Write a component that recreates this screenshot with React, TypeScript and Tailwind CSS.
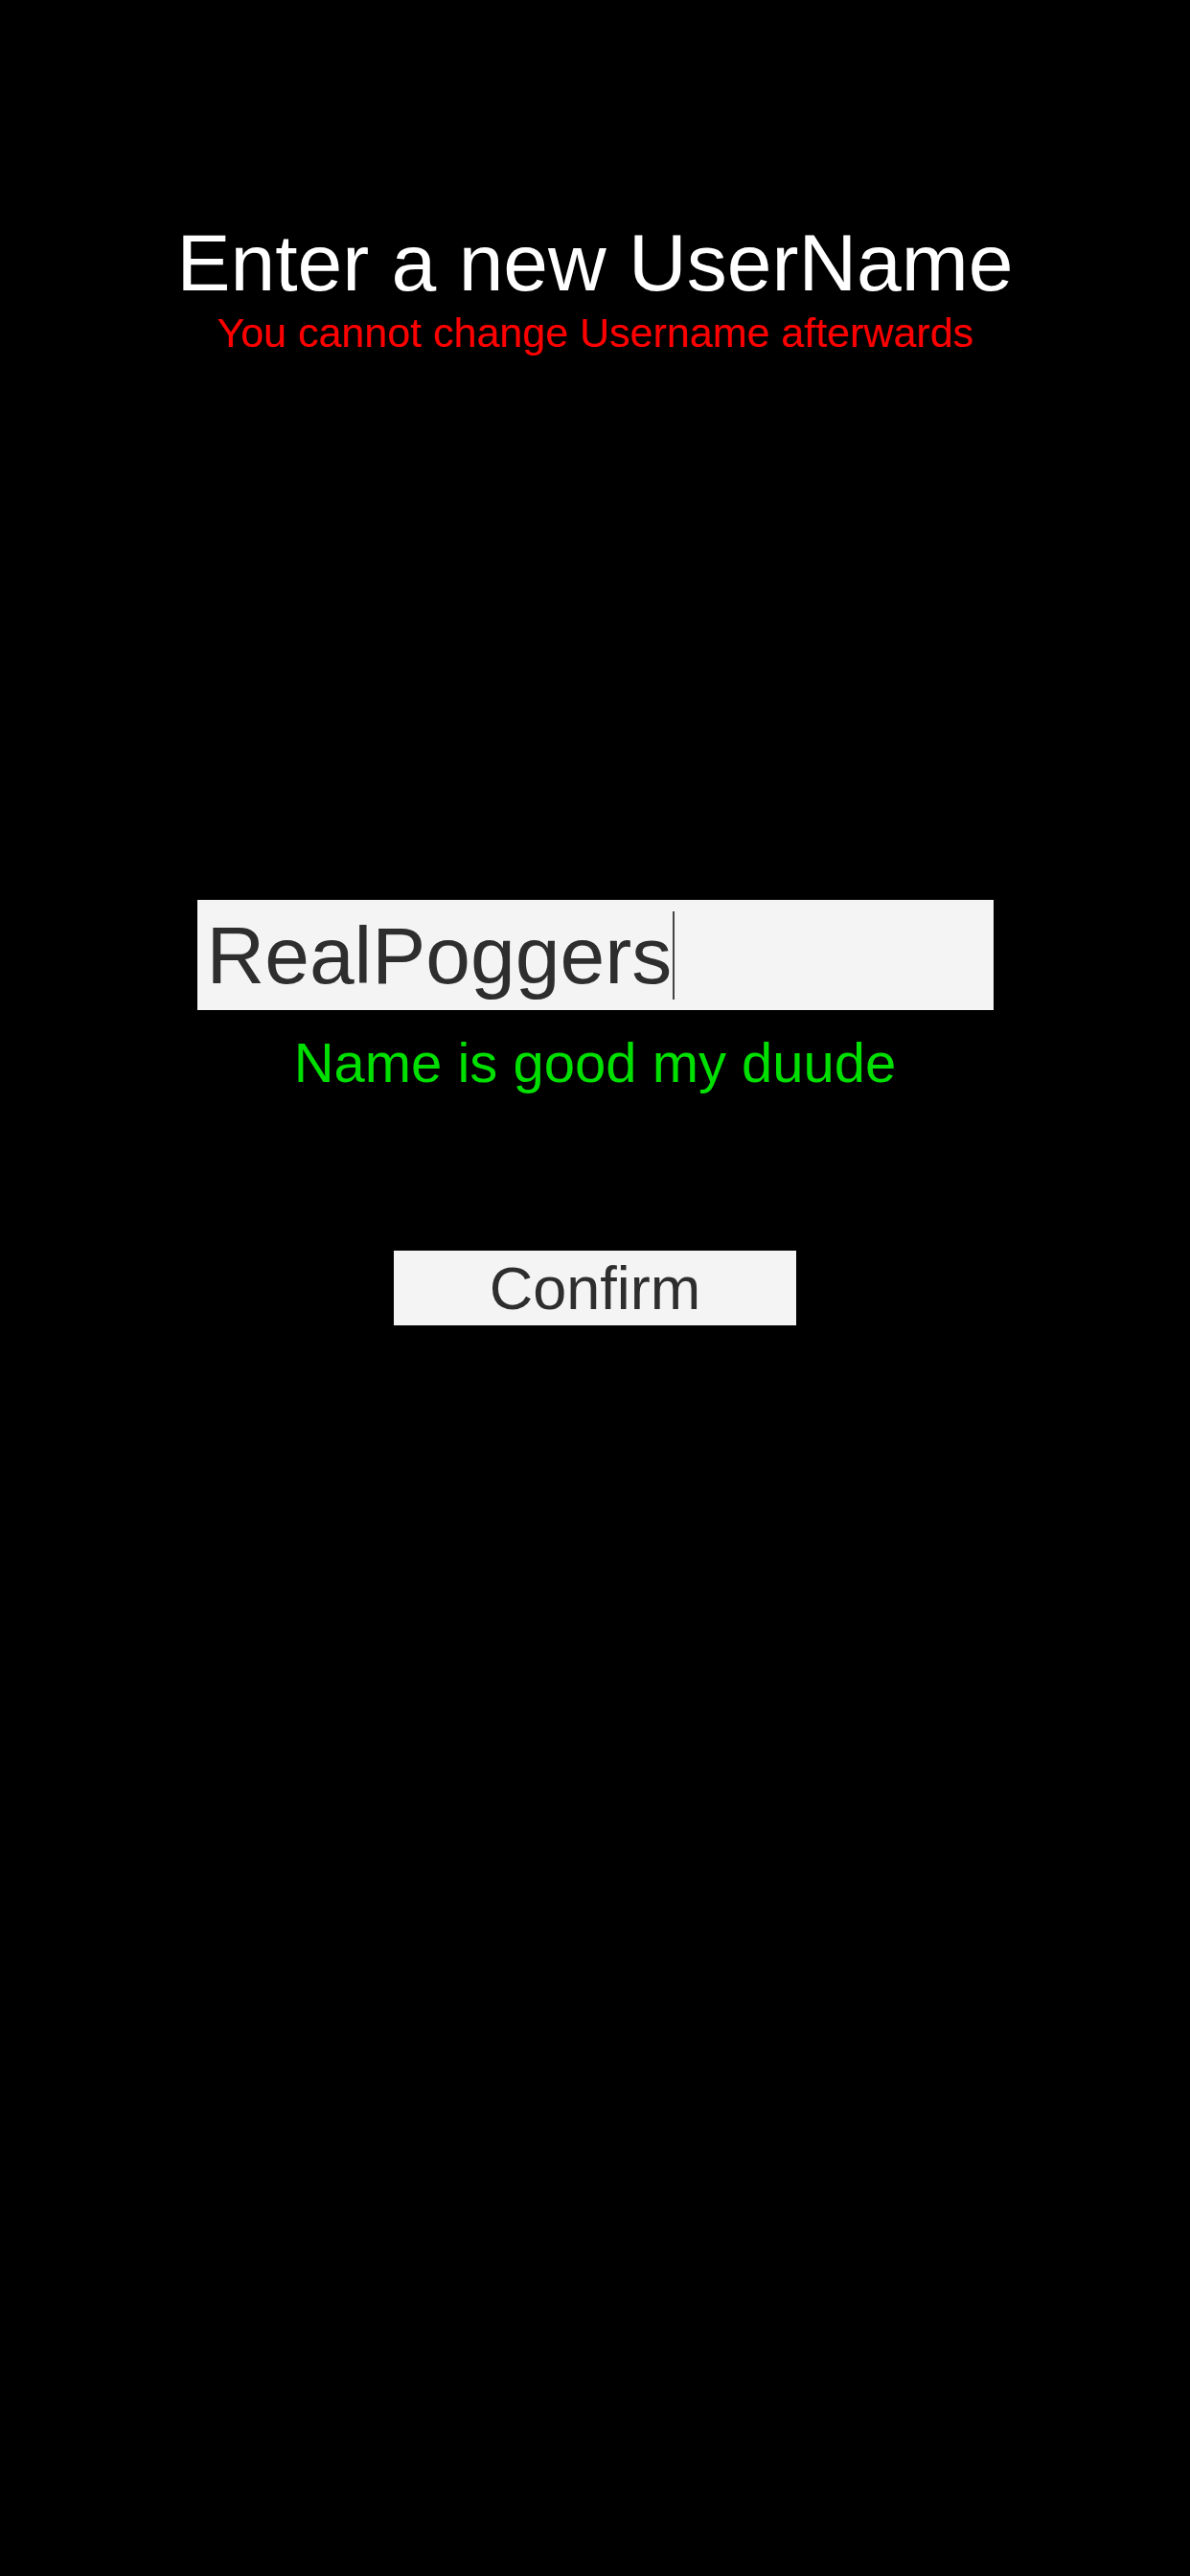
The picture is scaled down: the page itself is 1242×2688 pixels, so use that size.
import { useState } from "react";

const App = () => {
  const [name] = useState("RealPoggers");

  return (
    <div className="min-h-screen w-full bg-black flex flex-col items-center font-['Liberation_Sans',Arial,sans-serif]">
      {/* Header */}
      <h1 className="mt-[232px] text-[84px] leading-none text-white font-normal">
        Enter a new UserName
      </h1>
      <p className="mt-[10px] text-[43px] leading-none text-[#ff0000]">
        You cannot change Username afterwards
      </p>

      {/* Name field */}
      <div className="mt-[570px] w-[831px] h-[115px] bg-[#f4f4f4] flex items-center pl-[10px]">
        <span className="text-[84px] leading-none text-[#2e2e2e]">{name}</span>
        <span className="inline-block w-[2px] h-[92px] bg-[#444] ml-[1px]" />
      </div>
      <p className="mt-[26px] text-[58px] leading-none text-[#00e000]">Name is good my duude</p>

      <button className="mt-[167px] w-[420px] h-[78px] bg-[#f4f4f4] text-[63px] leading-none text-[#2e2e2e] flex items-center justify-center">
        Confirm
      </button>
    </div>
  );
};

export default App;
